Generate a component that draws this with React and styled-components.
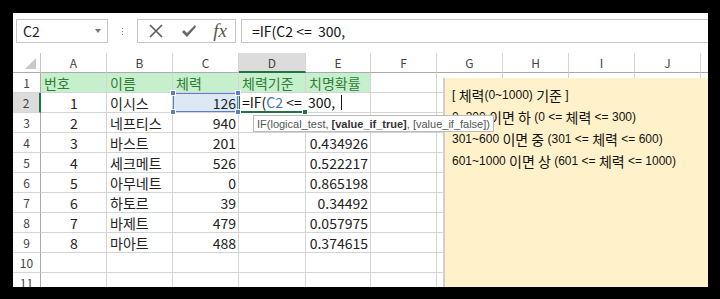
import React from 'react';
import styled, { createGlobalStyle } from 'styled-components';

const GlobalStyle = createGlobalStyle`
  html, body { margin: 0; padding: 0; background: #000; }
  body { font-family: "Noto Sans CJK KR", "Noto Sans", sans-serif; }
`;

const Frame = styled.div`
  margin: 13px 0 0 13px;
  width: 695px;
  height: 274px;
  background: #fff;
  overflow: hidden;
  position: relative;
`;

const FormulaBar = styled.div`
  height: 40px;
  box-sizing: border-box;
  display: flex;
  align-items: flex-start;
  padding: 6px 0 0 3px;
`;

const NameBox = styled.div`
  width: 92px;
  height: 24px;
  box-sizing: border-box;
  border: 1px solid #c6c6c6;
  display: flex;
  align-items: center;
  justify-content: space-between;
  padding: 0 6px 0 6px;
  font-size: 14px;
  color: #222;
`;

const Caret = styled.span`
  width: 0;
  height: 0;
  border-left: 3px solid transparent;
  border-right: 3px solid transparent;
  border-top: 4px solid #777;
`;

const Dots = styled.div`
  width: 29px;
  height: 24px;
  display: flex;
  flex-direction: column;
  align-items: center;
  justify-content: center;
  gap: 2px;
  & > i {
    width: 1px;
    height: 1px;
    background: #888;
  }
`;

const FxBox = styled.div`
  width: 99px;
  height: 24px;
  box-sizing: border-box;
  border: 1px solid #c6c6c6;
  display: flex;
  align-items: center;
  padding: 0 8px 0 10px;
  justify-content: space-between;
`;

const Fx = styled.span`
  font-family: "Liberation Serif", serif;
  font-style: italic;
  font-size: 19px;
  color: #555;
  line-height: 1;
  margin-top: -2px;
`;

const FormulaInput = styled.div`
  flex: 1;
  margin-left: 5px;
  height: 24px;
  box-sizing: border-box;
  border: 1px solid #c6c6c6;
  border-right: none;
  display: flex;
  align-items: center;
  padding-left: 10px;
  font-size: 14px;
  color: #111;
  white-space: pre;
`;

const Sheet = styled.div`
  display: grid;
  grid-template-columns: 28px 66px 66px 66px 67px 65px 66px 66px 66px 66px 66px 66px;
  grid-auto-rows: 20px;
`;

const Corner = styled.div`
  box-sizing: border-box;
  border-right: 1px solid #c8c8c8;
  border-bottom: 1px solid #ababab;
  position: relative;
  &::after {
    content: "";
    position: absolute;
    right: 4px;
    bottom: 3px;
    border-left: 11px solid transparent;
    border-bottom: 11px solid #c9c9c9;
  }
`;

const ColHead = styled.div`
  box-sizing: border-box;
  border-right: 1px solid #d4d4d4;
  border-bottom: ${(p) => (p.$active ? '2px solid #217346' : '1px solid #ababab')};
  background: ${(p) => (p.$active ? '#dcdcdc' : '#fff')};
  color: #444;
  font-size: 12px;
  display: flex;
  align-items: center;
  justify-content: center;
`;

const RowHead = styled.div`
  box-sizing: border-box;
  border-right: ${(p) => (p.$active ? '2px solid #217346' : '1px solid #ababab')};
  border-bottom: 1px solid #d4d4d4;
  background: ${(p) => (p.$active ? '#dcdcdc' : '#fff')};
  color: #444;
  font-size: 12px;
  display: flex;
  align-items: center;
  justify-content: center;
`;

const Cell = styled.div`
  box-sizing: border-box;
  position: relative;
  border-right: 1px solid #d4d4d4;
  border-bottom: 1px solid #d4d4d4;
  background: ${(p) => (p.$good ? '#c6efce' : p.$selected ? '#dde8f5' : '#fff')};
  color: ${(p) => (p.$good ? '#2e7d32' : '#222')};
  box-shadow: ${(p) => (p.$selected ? 'inset 0 0 0 1px #5b7fc7' : 'none')};
  font-size: 14px;
  display: flex;
  align-items: center;
  justify-content: ${(p) => (p.$align === 'right' ? 'flex-end' : p.$align === 'center' ? 'center' : 'flex-start')};
  padding: 0 2px 0 3px;
  white-space: nowrap;
  line-height: 1;
`;

const Handle = styled.span`
  position: absolute;
  width: 4px;
  height: 4px;
  background: ${(p) => p.$color || '#5b7fc7'};
  border: 1px solid #fff;
  z-index: 4;
  ${(p) => (p.$top ? 'top: -3px;' : 'bottom: -3px;')}
  ${(p) => (p.$left ? 'left: -3px;' : 'right: -3px;')}
`;

const EditBox = styled.div`
  position: absolute;
  left: 0;
  top: 0;
  height: 18px;
  width: 104px;
  box-sizing: border-box;
  background: #fff;
  border-left: 1px solid #217346;
  display: flex;
  align-items: center;
  padding-left: 2px;
  font-size: 14px;
  color: #111;
  white-space: pre;
  z-index: 3;
`;

const EditUnderline = styled.span`
  position: absolute;
  left: 0;
  right: 0;
  bottom: -1px;
  height: 2px;
  background: #217346;
  z-index: 3;
`;

const Ref = styled.span`
  color: #4472c4;
`;

const TextCursor = styled.span`
  display: inline-block;
  width: 1px;
  height: 15px;
  background: #111;
  margin-left: 6px;
`;

const Tooltip = styled.div`
  position: absolute;
  left: 240px;
  top: 102px;
  height: 17px;
  box-sizing: border-box;
  padding: 0 3px;
  border: 1px solid #bcbcbc;
  background: #fff;
  color: #555;
  font-family: "Liberation Sans", "Noto Sans", sans-serif;
  font-size: 11px;
  display: flex;
  align-items: center;
  white-space: pre;
  z-index: 6;
  & b {
    color: #333;
  }
`;

const Note = styled.div`
  position: absolute;
  left: 430px;
  top: 65px;
  width: 265px;
  height: 209px;
  box-sizing: border-box;
  background: #fff1c9;
  border-left: 2px solid #d2d0c8;
  padding: 6px 0 0 7px;
  color: #111;
  font-family: "Liberation Sans", "Noto Sans", sans-serif;
  font-size: 12px;
`;

const NoteLine = styled.div`
  height: 22px;
  display: flex;
  align-items: center;
  white-space: pre;
`;

const K = styled.span`
  font-family: "Noto Sans CJK KR", sans-serif;
  font-size: 14px;
  line-height: 1;
`;

const cols = ['A', 'B', 'C', 'D', 'E', 'F', 'G', 'H', 'I', 'J', ''];

const headers = ['번호', '이름', '체력', '체력기준', '치명확률'];

const data = [
  [1, '이시스', 126, ''],
  [2, '네프티스', 940, ''],
  [3, '바스트', 201, '0.434926'],
  [4, '세크메트', 526, '0.522217'],
  [5, '아무네트', 0, '0.865198'],
  [6, '하토르', 39, '0.34492'],
  [7, '바제트', 479, '0.057975'],
  [8, '마아트', 488, '0.374615'],
];

function CancelIcon() {
  return (
    <svg width="16" height="16" viewBox="0 0 16 16">
      <path d="M2 2 L14 14 M14 2 L2 14" stroke="#5f5f5f" strokeWidth="1.7" fill="none" />
    </svg>
  );
}

function EnterIcon() {
  return (
    <svg width="16" height="14" viewBox="0 0 16 14">
      <path d="M1 8 L3 6 L6 9 L14 1 L15 3 L6 13 Z" fill="#6a6a6a" />
    </svg>
  );
}

function EmptyCells({ from }) {
  return cols.slice(from).map((c, i) => <Cell key={i} />);
}

export default function App() {
  return (
    <>
      <GlobalStyle />
      <Frame>
        <FormulaBar>
          <NameBox>
            C2
            <Caret />
          </NameBox>
          <Dots>
            <i />
            <i />
            <i />
          </Dots>
          <FxBox>
            <CancelIcon />
            <EnterIcon />
            <Fx>fx</Fx>
          </FxBox>
          <FormulaInput>=IF(C2 &lt;=  300,</FormulaInput>
        </FormulaBar>

        <Sheet>
          <Corner />
          {cols.map((c, i) => (
            <ColHead key={i} $active={c === 'D'}>
              {c}
            </ColHead>
          ))}

          <RowHead>1</RowHead>
          {headers.map((h) => (
            <Cell key={h} $good>
              {h}
            </Cell>
          ))}
          <EmptyCells from={5} />

          {data.map(([no, name, hp, crit], i) => {
            const row = i + 2;
            const editing = row === 2;
            return (
              <React.Fragment key={row}>
                <RowHead $active={editing}>{row}</RowHead>
                <Cell $align="center">{no}</Cell>
                <Cell>{name}</Cell>
                <Cell $align="right" $selected={editing}>
                  {hp}
                  {editing && (
                    <>
                      <Handle $top $left />
                      <Handle $top />
                      <Handle $left />
                      <Handle />
                    </>
                  )}
                </Cell>
                <Cell>
                  {editing && (
                    <>
                      <EditBox>
                        =IF(<Ref>C2</Ref> &lt;=  300,
                        <TextCursor />
                      </EditBox>
                      <EditUnderline />
                      <Handle $color="#217346" />
                    </>
                  )}
                </Cell>
                <Cell $align="right">{crit}</Cell>
                <EmptyCells from={5} />
              </React.Fragment>
            );
          })}

          {[10, 11].map((row) => (
            <React.Fragment key={row}>
              <RowHead>{row}</RowHead>
              <EmptyCells from={0} />
            </React.Fragment>
          ))}
        </Sheet>

        <Note>
          <NoteLine>
            [ <K>체력</K>(0~1000) <K>기준</K> ]
          </NoteLine>
          <NoteLine>
            0~300 <K>이면 하</K> (0 &lt;= <K>체력</K> &lt;= 300)
          </NoteLine>
          <NoteLine>
            301~600 <K>이면 중</K> (301 &lt;= <K>체력</K> &lt;= 600)
          </NoteLine>
          <NoteLine>
            601~1000 <K>이면 상</K> (601 &lt;= <K>체력</K> &lt;= 1000)
          </NoteLine>
        </Note>

        <Tooltip>
          IF(logical_test, <b>[value_if_true]</b>, [value_if_false])
        </Tooltip>
      </Frame>
    </>
  );
}
